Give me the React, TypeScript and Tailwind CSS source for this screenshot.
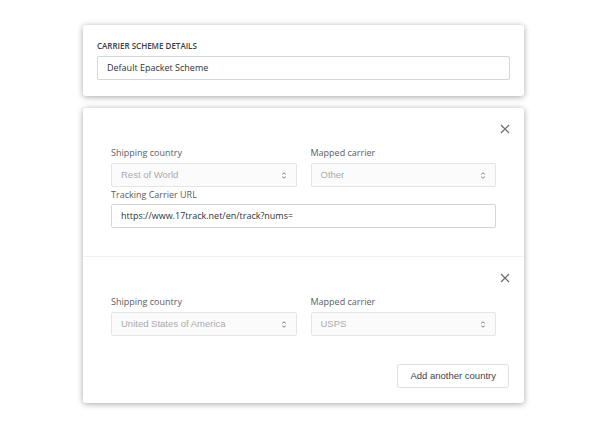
function Chevrons() {
  return (
    <svg width="6" height="9" viewBox="0 0 6 9" className="text-gray-500">
      <path d="M1.2 3.3 L3 1.8 L4.8 3.3" fill="none" stroke="currentColor" strokeWidth="0.9" />
      <path d="M1.2 5.7 L3 7.2 L4.8 5.7" fill="none" stroke="currentColor" strokeWidth="0.9" />
    </svg>
  )
}

function CloseIcon() {
  return (
    <svg width="10" height="10" viewBox="0 0 10 10" className="text-[#6b6f73]">
      <path d="M1 1 L9 9 M9 1 L1 9" stroke="currentColor" strokeWidth="1.2" />
    </svg>
  )
}

function SelectBox({ value }: { value: string }) {
  return (
    <div className="h-[24px] flex items-center justify-between pl-[9px] pr-[9px] border border-[#e3e5e8] rounded-[2px] bg-[#fbfbfc] font-['Liberation_Sans',Arial,sans-serif] text-[9.5px] text-[#a9abae]">
      <span>{value}</span>
      <Chevrons />
    </div>
  )
}

function Field({ label, value }: { label: string; value: string }) {
  return (
    <div className="flex-1">
      <div className="text-[9px] text-[#5a5e63] leading-[12px] mb-[4px]">{label}</div>
      <SelectBox value={value} />
    </div>
  )
}

export default function App() {
  return (
    <div className="w-[600px] h-[438px] bg-white font-['Open_Sans',sans-serif] pt-[25px]">
      {/* Scheme name */}
      <div className="ml-[83px] w-[441px] bg-white rounded-[3px] shadow-[0_1px_6px_rgba(0,0,0,0.35)] px-[14px] pt-[15px] pb-[16px]">
        <div className="text-[8px] font-semibold text-[#3b3f44] leading-[12px] mb-[4px]">
          CARRIER SCHEME DETAILS
        </div>
        <div className="h-[24px] flex items-center px-[9px] border border-[#d3d7dc] rounded-[2px] text-[9px] text-[#2f3337]">
          Default Epacket Scheme
        </div>
      </div>

      {/* Country mappings */}
      <div className="ml-[83px] mt-[12px] w-[441px] bg-white rounded-[3px] shadow-[0_1px_6px_rgba(0,0,0,0.35)]">
        <div className="px-[28px] pt-[14px] pb-[28px] border-b border-[#f0f1f2]">
          <div className="flex justify-end items-center -mr-[14px] h-[14px]">
            <CloseIcon />
          </div>
          <div className="flex gap-[14px] mt-[11px]">
            <Field label="Shipping country" value="Rest of World" />
            <Field label="Mapped carrier" value="Other" />
          </div>
          <div className="text-[9px] text-[#5a5e63] leading-[12px] mt-[2px] mb-[3px]">Tracking Carrier URL</div>
          <div className="h-[24px] flex items-center px-[9px] border border-[#d3d7dc] rounded-[2px] text-[9px] text-[#2f3337]">
            https://www.17track.net/en/track?nums=
          </div>
        </div>
        <div className="px-[28px] pt-[14px] pb-[15px]">
          <div className="flex justify-end items-center -mr-[14px] h-[14px]">
            <CloseIcon />
          </div>
          <div className="flex gap-[14px] mt-[11px]">
            <Field label="Shipping country" value="United States of America" />
            <Field label="Mapped carrier" value="USPS" />
          </div>
          <div className="flex justify-end mt-[28px] -mr-[13px]">
            <button className="h-[24px] px-[12px] border border-[#dfe2e5] rounded-[2px] bg-white font-['Liberation_Sans',Arial,sans-serif] text-[9.5px] text-[#3e4247]">
              Add another country
            </button>
          </div>
        </div>
      </div>
    </div>
  )
}
